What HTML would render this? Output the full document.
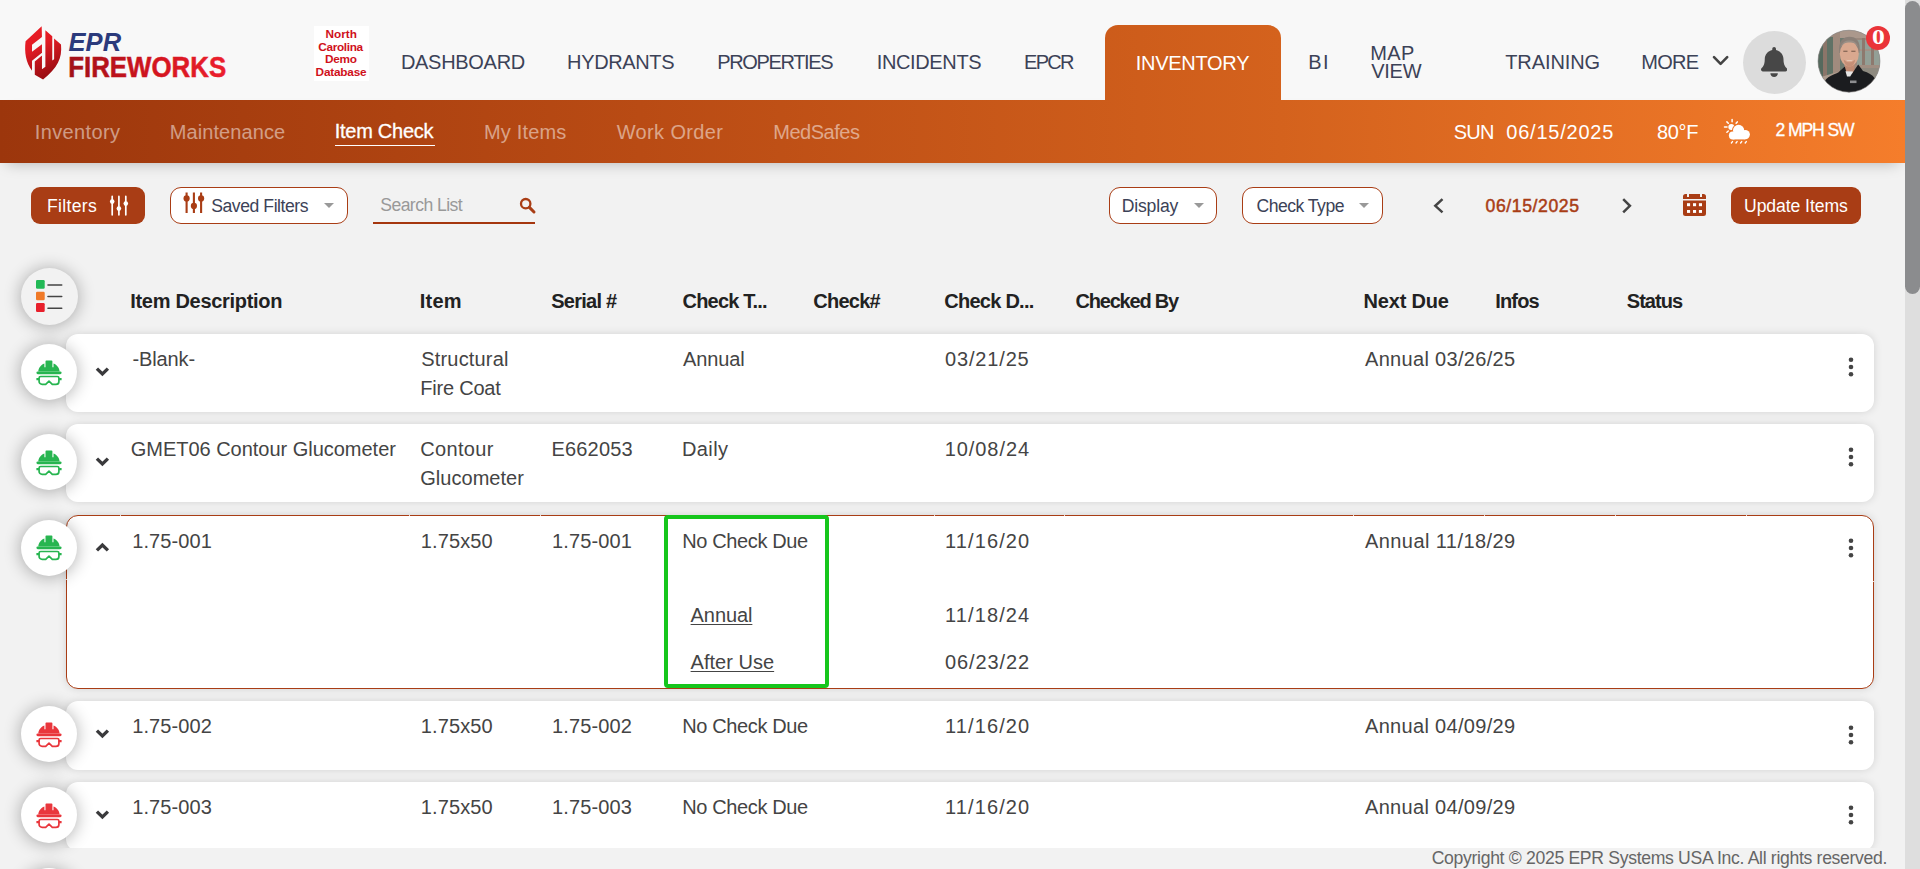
<!DOCTYPE html>
<html lang="en">
<head>
<meta charset="utf-8">
<title>EPR FireWorks - Item Check</title>
<style>
html,body{margin:0;padding:0;}
body{width:1920px;height:869px;overflow:hidden;background:#f2f2f2;font-family:"Liberation Sans",sans-serif;position:relative;}
#pg{position:absolute;left:0;top:0;width:1920px;height:869px;overflow:hidden;}
.a{position:absolute;}
.t{position:absolute;white-space:nowrap;z-index:5;}
.t.z{z-index:9;}
#hdr{left:0;top:0;width:1905px;height:100px;background:#f8f8f8;}
#tab{left:1105px;top:25px;width:176px;height:76px;border-radius:13px 13px 0 0;background:linear-gradient(90deg,#9c360c 0,#b94b14 640px,#d4621d 1280px,#f57d2b 1905px);background-size:1905px 100%;background-position:-1105px 0;background-repeat:no-repeat;z-index:3;}
#sub{left:0;top:100px;width:1905px;height:62.5px;background:linear-gradient(90deg,#9c360c 0,#b94b14 640px,#d4621d 1280px,#f57d2b 1905px);box-shadow:0 7px 14px -7px rgba(0,0,0,.27);z-index:2;}
#sbt{left:1905px;top:0;width:15px;height:869px;background:#dedede;z-index:20;}
#sbh{left:1905px;top:1px;width:15px;height:293px;border-radius:7.5px;background:#8b8c8e;z-index:21;}
.ul{background:#fff;height:1.3px;z-index:5;}
.btn{background:#a93d15;border-radius:9px;}
.sel{background:#fff;border:1px solid #a93d15;border-radius:11px;box-sizing:border-box;}
.caret{width:0;height:0;border-left:5px solid transparent;border-right:5px solid transparent;border-top:5.5px solid #999;}
.card{left:66px;width:1808px;background:#fff;border-radius:12px;box-shadow:0 0 9px rgba(0,0,0,.13);z-index:1;}
.card.sel3{box-sizing:border-box;border:1px solid #a93d15;border-radius:12px;}
.circ{left:21px;width:56px;height:56px;border-radius:50%;background:#fff;box-shadow:0 1px 17px rgba(0,0,0,.32);z-index:12;}
.circ svg{position:absolute;left:15px;top:15.5px;}
.dots{left:1846.8px;width:8px;height:22px;z-index:5;}
.chev{left:95.1px;margin-top:-.4px;width:15px;height:11px;z-index:5;}
#foot{left:0;top:848px;width:1905px;height:21px;background:#f2f2f2;z-index:8;}
#gbox{left:663.6px;top:514.5px;width:165.6px;height:173.4px;box-sizing:border-box;border:4px solid #16c61c;border-radius:4px;z-index:6;}
</style>
</head>
<body>
<div id="pg">

<!-- ===== top header ===== -->
<div id="hdr" class="a"></div>
<div id="tab" class="a"></div>
<div id="sub" class="a"></div>
<div id="sbt" class="a"></div>
<div id="sbh" class="a"></div>

<svg class="a" style="left:15px;top:15px;z-index:4;" width="120" height="80" viewBox="0 0 1304 869">
<defs>
<linearGradient id="lg1" x1="0" y1="0" x2="0.35" y2="1"><stop offset="0" stop-color="#ee1c25"/><stop offset=".45" stop-color="#e01b24"/><stop offset="1" stop-color="#9c0d12"/></linearGradient>
</defs>
<path fill="url(#lg1)" d="M290 122 L115 285 C100 400 118 520 185 605 L185 498 L293 410 L293 590 L330 562 L330 165 L405 232 L405 495 L425 480 L425 255 L500 320 C514 470 462 575 305 700 L215 648 L215 505 L293 440 L293 318 L185 398 L185 322 L293 240 Z"/>
</svg>
<svg class="a" style="left:60px;top:24px;z-index:4;overflow:visible" width="180" height="60">
<defs><linearGradient id="lg2" x1="0" y1="0" x2="1" y2="0"><stop offset="0" stop-color="#a01019"/><stop offset=".55" stop-color="#d3141f"/><stop offset="1" stop-color="#ec1f2e"/></linearGradient></defs>
<text x="8.6" y="26.6" font-family="Liberation Sans, sans-serif" font-weight="700" font-style="italic" font-size="26" fill="#2b3a7c" textLength="52.5" lengthAdjust="spacingAndGlyphs">EPR</text>
<text x="8.2" y="52.7" font-family="Liberation Sans, sans-serif" font-weight="700" font-size="28.8" fill="url(#lg2)" stroke="url(#lg2)" stroke-width=".5" textLength="158" lengthAdjust="spacingAndGlyphs">FIREWORKS</text>
</svg>

<!-- NC white box -->
<div class="a" style="left:314px;top:26px;width:55px;height:55px;background:#fff;z-index:1;"></div>

<svg class="a" style="left:1712px;top:55px;z-index:4;" width="18" height="12" viewBox="0 0 18 12"><path d="M2 2.2 L8.6 8.8 L15.2 2.2" fill="none" stroke="#444" stroke-width="2.6" stroke-linecap="round" stroke-linejoin="round"/></svg>
<div class="a" style="left:1743px;top:30.5px;width:63px;height:63px;border-radius:50%;background:#dcdcdc;z-index:4;"></div>
<svg class="a" style="left:1761.2px;top:47px;z-index:5;" width="26.25" height="30" viewBox="0 0 448 512"><path fill="#474747" d="M224 512c35.32 0 63.97-28.65 63.97-64H160.03c0 35.35 28.65 64 63.97 64zm215.39-149.71c-19.32-20.76-55.47-51.99-55.47-154.29 0-77.7-54.48-139.9-127.94-155.16V32c0-17.67-14.32-32-31.98-32s-31.98 14.33-31.98 32v20.84C118.560 68.100 64.080 130.300 64.080 208c0 102.300-36.150 133.530-55.470 154.290-6 6.450-8.660 14.160-8.610 21.710.11 16.400 12.980 32 32.100 32h383.800c19.120 0 32-15.600 32.100-32 .05-7.550-2.610-15.270-8.610-21.710z"/></svg>
<svg class="a" style="left:1817px;top:29px;z-index:4;" width="64" height="64" viewBox="0 0 64 64">
<defs><clipPath id="avc"><circle cx="32" cy="32.2" r="31"/></clipPath></defs>
<g clip-path="url(#avc)">
<rect width="64" height="64" fill="#9a887d"/>
<rect x="0" y="10" width="6" height="38" fill="#55695d"/>
<rect x="6" y="6" width="4" height="44" fill="#8b7569"/>
<rect x="10" y="8" width="6" height="40" fill="#607266"/>
<rect x="16" y="4" width="7" height="46" fill="#a08b7e"/>
<rect x="23" y="0" width="30" height="9" fill="#ab988c"/>
<rect x="23" y="9" width="4" height="34" fill="#6e7a70"/>
<rect x="40" y="11" width="24" height="27" fill="#939f96"/>
<rect x="40" y="20" width="24" height="2" fill="#a39186"/>
<rect x="45" y="9" width="3" height="36" fill="#8d796e"/>
<rect x="54" y="13" width="3" height="36" fill="#8d796e"/>
<rect x="38" y="36" width="26" height="3" fill="#a08e82"/>
<rect x="40" y="39" width="24" height="14" fill="#8e8a80"/>
<path d="M-2 50 L20 43 L20 48 L-2 56Z" fill="#ab9a8d"/>
<path d="M22.300 24 C20.800 12 26.500 7.800 32.600 7.800 C39 7.800 44 12 42.400 24Z" fill="#8a7f77"/>
<rect x="28" y="33" width="9.500" height="12" fill="#c08a72"/>
<ellipse cx="32.300" cy="24.800" rx="9.500" ry="12.600" fill="#d9a88f"/>
<path d="M23.500 18.500 C25 13.200 28.500 11.600 32.500 11.600 C36.500 11.600 40 13.200 41.300 18.500 C39.500 14.800 36.500 13.600 32.500 13.600 C28.500 13.600 25.500 14.800 23.500 18.500Z" fill="#9a8f86"/>
<path d="M26.500 30.500 Q32.500 36 38.200 30.500 Q37.500 37 32.500 37.800 Q27.500 37 26.500 30.500Z" fill="#c58f77"/>
<path d="M28.800 30.800 Q32.500 33.200 36.200 30.800 Q32.500 32 28.800 30.800Z" fill="#f2e6e0"/>
<rect x="26.300" y="21.700" width="4.200" height="1.100" fill="#7a5c4e"/><rect x="34.300" y="21.700" width="4.200" height="1.100" fill="#7a5c4e"/>
<path d="M4 64 C6 51 10 47.500 21 43.800 L27.800 37.500 L30 45.500 L35 44.800 L41.200 35.500 L46 42 C57 45 61 51 61.500 64Z" fill="#1b1c1f"/>
<path d="M28.500 42.200 L36.200 42.600 L33.200 47.500 L30 47.500Z" fill="#e6e6e6"/>
<rect x="33" y="51.500" width="6.500" height="2.600" fill="#8d8d90"/>
</g>
<circle cx="32" cy="32.200" r="31" fill="none" stroke="#8a8a8a" stroke-width=".6"/>
</svg>
<div class="a" style="left:1866px;top:26px;width:24px;height:24px;border-radius:50%;background:#ea3439;z-index:4;"></div>

<!-- sub nav active underline -->
<div class="a ul" style="left:335px;top:144.7px;width:100px;"></div>

<svg class="a" style="left:1722px;top:117px;z-index:5;" width="30" height="28" viewBox="0 0 30 28">
<g stroke="#fff" stroke-width="1.500" stroke-linecap="round"><path d="M10.100 2.600 V4.800 M4.900 4.900 L6.300 6.300 M2.500 10.100 H5 M4.900 15.200 L6.300 14 M15.300 4.900 L14.100 6.300"/></g>
<circle cx="9.300" cy="9.900" r="3" fill="#fff"/>
<g fill="#ed7628" stroke="#ed7628" stroke-width="2"><circle cx="16.600" cy="13.400" r="5.600"/><circle cx="23.200" cy="17.600" r="4.700"/><circle cx="10.800" cy="18.500" r="3.900"/></g>
<g fill="#fff"><circle cx="16.600" cy="13.400" r="5.600"/><circle cx="23.200" cy="17.600" r="4.700"/><circle cx="10.800" cy="18.500" r="3.900"/><rect x="10.800" y="16" width="12.400" height="6.400"/></g>
<g stroke="#fff" stroke-width="1.400" stroke-linecap="round"><path d="M10.500 24.600 L9.400 26 M15.100 24.600 L14 26 M19.700 24.600 L18.600 26 M24.300 24.600 L23.200 26"/></g>
</svg>

<!-- ===== toolbar ===== -->
<div class="a btn" style="left:31px;top:187px;width:114px;height:37px;"></div>
<div class="a sel" style="left:170px;top:187px;width:178px;height:37px;"></div>
<div class="a caret" style="left:324px;top:203px;"></div>
<div class="a" style="left:373px;top:222px;width:162px;height:2px;background:#a5360e;"></div>
<div class="a sel" style="left:1109px;top:187px;width:108px;height:37px;"></div>
<div class="a caret" style="left:1194px;top:203px;"></div>
<div class="a sel" style="left:1242px;top:187px;width:141px;height:37px;"></div>
<div class="a caret" style="left:1359px;top:203px;"></div>
<div class="a btn" style="left:1731px;top:187px;width:130px;height:37px;"></div>

<svg class="a" style="left:108px;top:194px;z-index:5;" width="22" height="23" viewBox="0 0 22 23"><g stroke="#fff" stroke-width="1.700" stroke-linecap="round"><path d="M4.200 2.400 V20.800 M10.900 2.400 V20.800 M17.800 2.400 V20.800"/></g><circle cx="4.200" cy="7.600" r="2.300" fill="#fff"/><circle cx="10.900" cy="14.600" r="2.300" fill="#fff"/><circle cx="17.800" cy="9.600" r="2.300" fill="#fff"/></svg>
<svg class="a" style="left:182px;top:190px;z-index:5;" width="24" height="25" viewBox="0 0 24 25"><g stroke="#a93d15" stroke-width="2.100"><path d="M4.600 2.400 V23 M11.900 2.400 V23 M19.100 2.400 V23"/></g><circle cx="4.600" cy="8.400" r="3.100" fill="#a93d15"/><circle cx="11.900" cy="15.900" r="3.100" fill="#a93d15"/><circle cx="19.100" cy="8.400" r="3.100" fill="#a93d15"/></svg>
<svg class="a" style="left:519px;top:196.500px;z-index:5;" width="18" height="18" viewBox="0 0 18 18"><circle cx="6.700" cy="6.700" r="4.700" fill="none" stroke="#a93d15" stroke-width="2.300"/><path d="M10.400 10.400 L15 15" stroke="#a93d15" stroke-width="3" stroke-linecap="round"/></svg>
<svg class="a" style="left:1431px;top:196px;z-index:5;" width="16" height="20" viewBox="0 0 16 20"><path d="M11.500 3.200 L4.300 9.800 L11.500 16.400" fill="none" stroke="#444" stroke-width="2.500" stroke-linecap="butt" stroke-linejoin="miter"/></svg>
<svg class="a" style="left:1619px;top:196px;z-index:5;" width="16" height="20" viewBox="0 0 16 20"><path d="M4.200 3.200 L10.900 9.800 L4.200 16.400" fill="none" stroke="#444" stroke-width="2.500" stroke-linecap="butt" stroke-linejoin="miter"/></svg>
<svg class="a" style="left:1683px;top:193.800px;z-index:5;" width="23" height="22" viewBox="0 0 23 22"><path fill="#a93d15" d="M2.500 0 H4 V3 H6 V0 H17 V3 H19 V0 H20.500 A2.500 2.500 0 0 1 23 2.500 V4.900 H0 V2.500 A2.500 2.500 0 0 1 2.500 0Z M0 6.400 H23 V19.500 A2.500 2.500 0 0 1 20.500 22 H2.500 A2.500 2.500 0 0 1 0 19.500Z"/><g fill="#fff"><rect x="4" y="9.200" width="3.100" height="3"/><rect x="10" y="9.200" width="3.100" height="3"/><rect x="15.900" y="9.200" width="3.100" height="3"/><rect x="4" y="16" width="3.100" height="2.900"/><rect x="10" y="16" width="3.100" height="2.900"/><rect x="15.900" y="16" width="3.100" height="2.900"/></g></svg>

<!-- ===== table ===== -->
<div class="a" style="left:21px;top:267.500px;width:57px;height:57px;border-radius:50%;background:#f2f2f2;box-shadow:0 1px 17px rgba(0,0,0,.32);z-index:12;"></div>
<svg class="a" style="left:34px;top:278px;z-index:13;" width="32" height="36" viewBox="0 0 32 36"><rect x="2" y="2" width="8.700" height="8.700" rx="1.200" fill="#22b956"/><rect x="2" y="13.700" width="8.700" height="8.600" rx="1.200" fill="#f07a28"/><rect x="2" y="25.100" width="8.700" height="8.800" rx="1.200" fill="#e8202c"/><g stroke="#444" stroke-width="1.600" stroke-linecap="round"><path d="M14 7 H27.700 M14 18.500 H27.700 M14 30.300 H27.700"/></g></svg>

<div class="a card" style="top:334px;height:78px;"></div>
<div class="a card" style="top:424px;height:78px;"></div>
<div class="a card sel3" style="top:515px;height:173.5px;"></div>
<div class="a card" style="top:701px;height:68.5px;"></div>
<div class="a card" style="top:782px;height:68.5px;"></div>
<div id="gbox" class="a"></div>
<div class="a" style="left:119.5px;top:515px;width:1.200px;height:1px;background:#f3d9cf;z-index:2;"></div><div class="a" style="left:409px;top:515px;width:1.200px;height:1px;background:#f3d9cf;z-index:2;"></div><div class="a" style="left:540px;top:515px;width:1.200px;height:1px;background:#f3d9cf;z-index:2;"></div><div class="a" style="left:933.5px;top:515px;width:1.200px;height:1px;background:#f3d9cf;z-index:2;"></div><div class="a" style="left:1064px;top:515px;width:1.200px;height:1px;background:#f3d9cf;z-index:2;"></div><div class="a" style="left:1352.5px;top:515px;width:1.200px;height:1px;background:#f3d9cf;z-index:2;"></div><div class="a" style="left:1484px;top:515px;width:1.200px;height:1px;background:#f3d9cf;z-index:2;"></div><div class="a" style="left:1615px;top:515px;width:1.200px;height:1px;background:#f3d9cf;z-index:2;"></div><div class="a" style="left:1745.5px;top:515px;width:1.200px;height:1px;background:#f3d9cf;z-index:2;"></div><div class="a" style="left:66px;top:578.500px;width:1px;height:1.200px;background:#f3d9cf;z-index:2;"></div><div class="a" style="left:1873px;top:580.500px;width:1px;height:1.200px;background:#f3d9cf;z-index:2;"></div>

<div class="a circ" style="top:344px;"><svg width="27" height="27" viewBox="0 0 27 27"><path fill="#27b550" d="M10.400 .4 H15.500 a.9 .9 0 0 1 .9 .9 V7.200 H17.500 V3.600 C21 5 23.500 8 23.600 11.600 H2.300 C2.400 8 4.900 5 8.400 3.600 V7.200 H9.500 V1.300 a.9 .9 0 0 1 .9 -.9Z"/><rect x=".4" y="11.400" width="25.200" height="2.900" rx="1.450" fill="#27b550"/><path fill="none" stroke="#27b550" stroke-width="1.700" stroke-linejoin="round" d="M4.700 16.500 H21.300 a1.600 1.600 0 0 1 1.600 1.600 V21.400 a3 3 0 0 1 -3 3 H16.300 L13 21.200 L9.700 24.400 H6.100 a3 3 0 0 1 -3 -3 V18.100 a1.600 1.600 0 0 1 1.600 -1.600Z"/><path stroke="#27b550" stroke-width="2.300" d="M.4 19.200 H3 M23 19.200 H25.600"/></svg></div>
<svg class="a chev" style="top:366.5px;" viewBox="0 0 15 11"><path d="M1.900 2.600 L7.400 8 L12.900 2.600" fill="none" stroke="#3a3a3c" stroke-width="3.300" stroke-linecap="butt" stroke-linejoin="miter"/></svg>
<div class="a circ" style="top:434px;"><svg width="27" height="27" viewBox="0 0 27 27"><path fill="#27b550" d="M10.400 .4 H15.500 a.9 .9 0 0 1 .9 .9 V7.200 H17.500 V3.600 C21 5 23.500 8 23.600 11.600 H2.300 C2.400 8 4.900 5 8.400 3.600 V7.200 H9.500 V1.300 a.9 .9 0 0 1 .9 -.9Z"/><rect x=".4" y="11.400" width="25.200" height="2.900" rx="1.450" fill="#27b550"/><path fill="none" stroke="#27b550" stroke-width="1.700" stroke-linejoin="round" d="M4.700 16.500 H21.300 a1.600 1.600 0 0 1 1.600 1.600 V21.400 a3 3 0 0 1 -3 3 H16.300 L13 21.200 L9.700 24.400 H6.100 a3 3 0 0 1 -3 -3 V18.100 a1.600 1.600 0 0 1 1.600 -1.600Z"/><path stroke="#27b550" stroke-width="2.300" d="M.4 19.200 H3 M23 19.200 H25.600"/></svg></div>
<svg class="a chev" style="top:456.5px;" viewBox="0 0 15 11"><path d="M1.900 2.600 L7.400 8 L12.900 2.600" fill="none" stroke="#3a3a3c" stroke-width="3.300" stroke-linecap="butt" stroke-linejoin="miter"/></svg>
<div class="a circ" style="top:519.5px;"><svg width="27" height="27" viewBox="0 0 27 27"><path fill="#27b550" d="M10.400 .4 H15.500 a.9 .9 0 0 1 .9 .9 V7.200 H17.500 V3.600 C21 5 23.500 8 23.600 11.600 H2.300 C2.400 8 4.900 5 8.400 3.600 V7.200 H9.500 V1.300 a.9 .9 0 0 1 .9 -.9Z"/><rect x=".4" y="11.400" width="25.200" height="2.900" rx="1.450" fill="#27b550"/><path fill="none" stroke="#27b550" stroke-width="1.700" stroke-linejoin="round" d="M4.700 16.500 H21.300 a1.600 1.600 0 0 1 1.600 1.600 V21.400 a3 3 0 0 1 -3 3 H16.300 L13 21.200 L9.700 24.400 H6.100 a3 3 0 0 1 -3 -3 V18.100 a1.600 1.600 0 0 1 1.600 -1.600Z"/><path stroke="#27b550" stroke-width="2.300" d="M.4 19.200 H3 M23 19.200 H25.600"/></svg></div>
<svg class="a chev" style="top:542.8px;" viewBox="0 0 15 11"><path d="M1.900 8.400 L7.400 3 L12.900 8.400" fill="none" stroke="#3a3a3c" stroke-width="3.300" stroke-linecap="butt" stroke-linejoin="miter"/></svg>
<div class="a circ" style="top:706.3px;"><svg width="27" height="27" viewBox="0 0 27 27"><path fill="#e9363c" d="M10.400 .4 H15.500 a.9 .9 0 0 1 .9 .9 V7.200 H17.500 V3.600 C21 5 23.500 8 23.600 11.600 H2.300 C2.400 8 4.900 5 8.400 3.600 V7.200 H9.500 V1.300 a.9 .9 0 0 1 .9 -.9Z"/><rect x=".4" y="11.400" width="25.200" height="2.900" rx="1.450" fill="#e9363c"/><path fill="none" stroke="#e9363c" stroke-width="1.700" stroke-linejoin="round" d="M4.700 16.500 H21.300 a1.600 1.600 0 0 1 1.600 1.600 V21.400 a3 3 0 0 1 -3 3 H16.300 L13 21.200 L9.700 24.400 H6.100 a3 3 0 0 1 -3 -3 V18.100 a1.600 1.600 0 0 1 1.600 -1.600Z"/><path stroke="#e9363c" stroke-width="2.300" d="M.4 19.200 H3 M23 19.200 H25.600"/></svg></div>
<svg class="a chev" style="top:728.0px;" viewBox="0 0 15 11"><path d="M1.900 2.600 L7.400 8 L12.900 2.600" fill="none" stroke="#3a3a3c" stroke-width="3.300" stroke-linecap="butt" stroke-linejoin="miter"/></svg>
<div class="a circ" style="top:787px;"><svg width="27" height="27" viewBox="0 0 27 27"><path fill="#e9363c" d="M10.400 .4 H15.500 a.9 .9 0 0 1 .9 .9 V7.200 H17.500 V3.600 C21 5 23.500 8 23.600 11.600 H2.300 C2.400 8 4.900 5 8.400 3.600 V7.200 H9.500 V1.300 a.9 .9 0 0 1 .9 -.9Z"/><rect x=".4" y="11.400" width="25.200" height="2.900" rx="1.450" fill="#e9363c"/><path fill="none" stroke="#e9363c" stroke-width="1.700" stroke-linejoin="round" d="M4.700 16.500 H21.300 a1.600 1.600 0 0 1 1.600 1.600 V21.400 a3 3 0 0 1 -3 3 H16.300 L13 21.200 L9.700 24.400 H6.100 a3 3 0 0 1 -3 -3 V18.100 a1.600 1.600 0 0 1 1.600 -1.600Z"/><path stroke="#e9363c" stroke-width="2.300" d="M.4 19.200 H3 M23 19.200 H25.600"/></svg></div>
<svg class="a chev" style="top:809.0px;" viewBox="0 0 15 11"><path d="M1.900 2.600 L7.400 8 L12.900 2.600" fill="none" stroke="#3a3a3c" stroke-width="3.300" stroke-linecap="butt" stroke-linejoin="miter"/></svg>
<div class="a circ" style="top:868px;"><svg width="27" height="27" viewBox="0 0 27 27"><path fill="#e9363c" d="M10.400 .4 H15.500 a.9 .9 0 0 1 .9 .9 V7.200 H17.500 V3.600 C21 5 23.500 8 23.600 11.600 H2.300 C2.400 8 4.900 5 8.400 3.600 V7.200 H9.500 V1.300 a.9 .9 0 0 1 .9 -.9Z"/><rect x=".4" y="11.400" width="25.200" height="2.900" rx="1.450" fill="#e9363c"/><path fill="none" stroke="#e9363c" stroke-width="1.700" stroke-linejoin="round" d="M4.700 16.500 H21.300 a1.600 1.600 0 0 1 1.600 1.600 V21.400 a3 3 0 0 1 -3 3 H16.300 L13 21.200 L9.700 24.400 H6.100 a3 3 0 0 1 -3 -3 V18.100 a1.600 1.600 0 0 1 1.600 -1.600Z"/><path stroke="#e9363c" stroke-width="2.300" d="M.4 19.200 H3 M23 19.200 H25.600"/></svg></div>
<svg class="a dots" style="top:356px;" viewBox="0 0 8 22"><circle cx="4" cy="3.800" r="2.300" fill="#444"/><circle cx="4" cy="11" r="2.300" fill="#444"/><circle cx="4" cy="18.200" r="2.300" fill="#444"/></svg>
<svg class="a dots" style="top:446px;" viewBox="0 0 8 22"><circle cx="4" cy="3.800" r="2.300" fill="#444"/><circle cx="4" cy="11" r="2.300" fill="#444"/><circle cx="4" cy="18.200" r="2.300" fill="#444"/></svg>
<svg class="a dots" style="top:537px;" viewBox="0 0 8 22"><circle cx="4" cy="3.800" r="2.300" fill="#444"/><circle cx="4" cy="11" r="2.300" fill="#444"/><circle cx="4" cy="18.200" r="2.300" fill="#444"/></svg>
<svg class="a dots" style="top:723.5px;" viewBox="0 0 8 22"><circle cx="4" cy="3.800" r="2.300" fill="#444"/><circle cx="4" cy="11" r="2.300" fill="#444"/><circle cx="4" cy="18.200" r="2.300" fill="#444"/></svg>
<svg class="a dots" style="top:804px;" viewBox="0 0 8 22"><circle cx="4" cy="3.800" r="2.300" fill="#444"/><circle cx="4" cy="11" r="2.300" fill="#444"/><circle cx="4" cy="18.200" r="2.300" fill="#444"/></svg>


<div id="foot" class="a"></div>

<nav class="main-nav">
<span class="t" style="left:400.90px;top:52.27px;font-size:20px;line-height:20px;color:#3c4257;letter-spacing:-0.293px;">DASHBOARD</span>
<span class="t" style="left:567.10px;top:52.27px;font-size:20px;line-height:20px;color:#3c4257;letter-spacing:-0.367px;">HYDRANTS</span>
<span class="t" style="left:717.30px;top:52.27px;font-size:20px;line-height:20px;color:#3c4257;letter-spacing:-1.357px;">PROPERTIES</span>
<span class="t" style="left:876.70px;top:52.27px;font-size:20px;line-height:20px;color:#3c4257;letter-spacing:-0.355px;">INCIDENTS</span>
<span class="t" style="left:1024.00px;top:52.27px;font-size:20px;line-height:20px;color:#3c4257;letter-spacing:-1.708px;">EPCR</span>
<span class="t" style="left:1135.70px;top:53.07px;font-size:20px;line-height:20px;color:#fff;letter-spacing:-0.265px;">INVENTORY</span>
<span class="t" style="left:1308.20px;top:52.27px;font-size:20px;line-height:20px;color:#3c4257;letter-spacing:1.360px;">BI</span>
<span class="t" style="left:1370.25px;top:43.07px;font-size:20px;line-height:20px;color:#3c4257;letter-spacing:0.375px;">MAP</span>
<span class="t" style="left:1371.25px;top:61.07px;font-size:20px;line-height:20px;color:#3c4257;letter-spacing:-0.262px;">VIEW</span>
<span class="t" style="left:1505.20px;top:52.27px;font-size:20px;line-height:20px;color:#3c4257;letter-spacing:-0.086px;">TRAINING</span>
<span class="t" style="left:1641.20px;top:52.27px;font-size:20px;line-height:20px;color:#3c4257;letter-spacing:-0.687px;">MORE</span>
</nav>
<nav class="sub-nav">
<span class="t" style="left:34.75px;top:122.32px;font-size:20px;line-height:20px;color:rgba(255,255,255,.5);letter-spacing:0.373px;">Inventory</span>
<span class="t" style="left:169.75px;top:122.32px;font-size:20px;line-height:20px;color:rgba(255,255,255,.5);letter-spacing:0.085px;">Maintenance</span>
<span class="t" style="left:334.75px;top:121.07px;font-size:20px;line-height:20px;color:#fff;letter-spacing:-0.266px;-webkit-text-stroke:.3px #fff;">Item Check</span>
<span class="t" style="left:484.00px;top:122.32px;font-size:20px;line-height:20px;color:rgba(255,255,255,.5);letter-spacing:0.162px;">My Items</span>
<span class="t" style="left:616.75px;top:122.32px;font-size:20px;line-height:20px;color:rgba(255,255,255,.5);letter-spacing:0.354px;">Work Order</span>
<span class="t" style="left:773.25px;top:122.32px;font-size:20px;line-height:20px;color:rgba(255,255,255,.5);letter-spacing:-0.471px;">MedSafes</span>
<span class="t" style="left:1453.75px;top:122.32px;font-size:20px;line-height:20px;color:#fff;letter-spacing:-0.767px;">SUN</span>
<span class="t" style="left:1506.25px;top:122.32px;font-size:20px;line-height:20px;color:#fff;letter-spacing:0.781px;">06/15/2025</span>
<span class="t" style="left:1657.00px;top:122.32px;font-size:20px;line-height:20px;color:#fff;letter-spacing:-0.331px;">80°F</span>
<span class="t" style="left:1775.50px;top:122.10px;font-size:17.6px;line-height:17.6px;color:#fff;letter-spacing:-1.127px;-webkit-text-stroke:.3px #fff;">2 MPH SW</span>
</nav>
<section class="toolbar">
<span class="t" style="left:47.10px;top:197.60px;font-size:17.6px;line-height:17.6px;color:#fff;letter-spacing:0.284px;">Filters</span>
<span class="t" style="left:211.25px;top:197.60px;font-size:17.6px;line-height:17.6px;color:#3c4257;letter-spacing:-0.448px;">Saved Filters</span>
<span class="t" style="left:380.25px;top:197.10px;font-size:17.6px;line-height:17.6px;color:#999;letter-spacing:-0.562px;">Search List</span>
<span class="t" style="left:1121.80px;top:197.60px;font-size:17.6px;line-height:17.6px;color:#3c4257;letter-spacing:-0.198px;">Display</span>
<span class="t" style="left:1256.50px;top:197.60px;font-size:17.6px;line-height:17.6px;color:#3c4257;letter-spacing:-0.513px;">Check Type</span>
<span class="t" style="left:1485.50px;top:197.70px;font-size:17.6px;line-height:17.6px;color:#a93d15;letter-spacing:0.609px;-webkit-text-stroke:.5px #a93d15;">06/15/2025</span>
<span class="t" style="left:1744.00px;top:197.70px;font-size:17.6px;line-height:17.6px;color:#fff;letter-spacing:-0.076px;">Update Items</span>
</section>
<div class="table-head">
<span class="t" style="left:130.25px;top:291.07px;font-size:20px;line-height:20px;color:#222;letter-spacing:-0.299px;font-weight:700;">Item Description</span>
<span class="t" style="left:419.75px;top:291.07px;font-size:20px;line-height:20px;color:#222;letter-spacing:0.220px;font-weight:700;">Item</span>
<span class="t" style="left:551.25px;top:291.07px;font-size:20px;line-height:20px;color:#222;letter-spacing:-0.756px;font-weight:700;">Serial #</span>
<span class="t" style="left:682.50px;top:291.07px;font-size:20px;line-height:20px;color:#222;letter-spacing:-0.800px;font-weight:700;">Check T...</span>
<span class="t" style="left:813.25px;top:291.07px;font-size:20px;line-height:20px;color:#222;letter-spacing:-0.756px;font-weight:700;">Check#</span>
<span class="t" style="left:944.25px;top:291.07px;font-size:20px;line-height:20px;color:#222;letter-spacing:-0.738px;font-weight:700;">Check D...</span>
<span class="t" style="left:1075.50px;top:291.07px;font-size:20px;line-height:20px;color:#222;letter-spacing:-1.208px;font-weight:700;">Checked By</span>
<span class="t" style="left:1363.50px;top:291.07px;font-size:20px;line-height:20px;color:#222;letter-spacing:-0.188px;font-weight:700;">Next Due</span>
<span class="t" style="left:1495.25px;top:291.07px;font-size:20px;line-height:20px;color:#222;letter-spacing:-0.850px;font-weight:700;">Infos</span>
<span class="t" style="left:1626.75px;top:291.07px;font-size:20px;line-height:20px;color:#222;letter-spacing:-0.950px;font-weight:700;">Status</span>
</div>
<div class="row row-1">
<span class="t" style="left:132.50px;top:349.32px;font-size:20px;line-height:20px;color:#444;letter-spacing:-0.115px;">-Blank-</span>
<span class="t" style="left:421.25px;top:349.32px;font-size:20px;line-height:20px;color:#444;letter-spacing:0.179px;">Structural</span>
<span class="t" style="left:420.25px;top:378.07px;font-size:20px;line-height:20px;color:#444;letter-spacing:-0.211px;">Fire Coat</span>
<span class="t" style="left:683.00px;top:349.32px;font-size:20px;line-height:20px;color:#444;letter-spacing:-0.116px;">Annual</span>
<span class="t" style="left:945.00px;top:349.32px;font-size:20px;line-height:20px;color:#444;letter-spacing:0.839px;">03/21/25</span>
<span class="t" style="left:1365.00px;top:349.32px;font-size:20px;line-height:20px;color:#444;letter-spacing:0.317px;">Annual 03/26/25</span>
</div>
<div class="row row-2">
<span class="t" style="left:130.75px;top:438.82px;font-size:20px;line-height:20px;color:#444;letter-spacing:-0.021px;">GMET06 Contour Glucometer</span>
<span class="t" style="left:420.25px;top:438.82px;font-size:20px;line-height:20px;color:#444;letter-spacing:0.335px;">Contour</span>
<span class="t" style="left:420.25px;top:468.07px;font-size:20px;line-height:20px;color:#444;letter-spacing:0.032px;">Glucometer</span>
<span class="t" style="left:551.50px;top:438.82px;font-size:20px;line-height:20px;color:#444;letter-spacing:0.174px;">E662053</span>
<span class="t" style="left:682.00px;top:438.82px;font-size:20px;line-height:20px;color:#444;letter-spacing:0.387px;">Daily</span>
<span class="t" style="left:944.70px;top:438.82px;font-size:20px;line-height:20px;color:#444;letter-spacing:0.939px;">10/08/24</span>
</div>
<div class="row row-3 expanded">
<span class="t" style="left:132.25px;top:531.07px;font-size:20px;line-height:20px;color:#444;letter-spacing:0.095px;">1.75-001</span>
<span class="t" style="left:420.70px;top:531.07px;font-size:20px;line-height:20px;color:#444;letter-spacing:0.142px;">1.75x50</span>
<span class="t" style="left:551.90px;top:531.07px;font-size:20px;line-height:20px;color:#444;letter-spacing:0.153px;">1.75-001</span>
<span class="t" style="left:682.30px;top:531.07px;font-size:20px;line-height:20px;color:#444;letter-spacing:-0.385px;">No Check Due</span>
<span class="t" style="left:945.10px;top:531.07px;font-size:20px;line-height:20px;color:#444;letter-spacing:1.094px;">11/16/20</span>
<span class="t" style="left:1365.00px;top:531.07px;font-size:20px;line-height:20px;color:#444;letter-spacing:0.423px;">Annual 11/18/29</span>
<span class="t" style="left:690.60px;top:605.07px;font-size:20px;line-height:20px;color:#444;letter-spacing:-0.086px;text-decoration:underline;text-decoration-thickness:1.3px;text-underline-offset:2px;">Annual</span>
<span class="t" style="left:945.10px;top:605.07px;font-size:20px;line-height:20px;color:#444;letter-spacing:1.094px;">11/18/24</span>
<span class="t" style="left:690.60px;top:652.07px;font-size:20px;line-height:20px;color:#444;letter-spacing:0.020px;text-decoration:underline;text-decoration-thickness:1.3px;text-underline-offset:2px;">After Use</span>
<span class="t" style="left:945.00px;top:652.07px;font-size:20px;line-height:20px;color:#444;letter-spacing:0.896px;">06/23/22</span>
</div>
<div class="row row-4">
<span class="t" style="left:132.25px;top:716.07px;font-size:20px;line-height:20px;color:#444;letter-spacing:0.095px;">1.75-002</span>
<span class="t" style="left:420.70px;top:716.07px;font-size:20px;line-height:20px;color:#444;letter-spacing:0.142px;">1.75x50</span>
<span class="t" style="left:551.90px;top:716.07px;font-size:20px;line-height:20px;color:#444;letter-spacing:0.153px;">1.75-002</span>
<span class="t" style="left:682.30px;top:716.07px;font-size:20px;line-height:20px;color:#444;letter-spacing:-0.385px;">No Check Due</span>
<span class="t" style="left:945.10px;top:716.07px;font-size:20px;line-height:20px;color:#444;letter-spacing:1.094px;">11/16/20</span>
<span class="t" style="left:1365.00px;top:716.07px;font-size:20px;line-height:20px;color:#444;letter-spacing:0.317px;">Annual 04/09/29</span>
</div>
<div class="row row-5">
<span class="t" style="left:132.25px;top:797.07px;font-size:20px;line-height:20px;color:#444;letter-spacing:0.095px;">1.75-003</span>
<span class="t" style="left:420.70px;top:797.07px;font-size:20px;line-height:20px;color:#444;letter-spacing:0.142px;">1.75x50</span>
<span class="t" style="left:551.90px;top:797.07px;font-size:20px;line-height:20px;color:#444;letter-spacing:0.153px;">1.75-003</span>
<span class="t" style="left:682.30px;top:797.07px;font-size:20px;line-height:20px;color:#444;letter-spacing:-0.385px;">No Check Due</span>
<span class="t" style="left:945.10px;top:797.07px;font-size:20px;line-height:20px;color:#444;letter-spacing:1.094px;">11/16/20</span>
<span class="t" style="left:1365.00px;top:797.07px;font-size:20px;line-height:20px;color:#444;letter-spacing:0.317px;">Annual 04/09/29</span>
</div>
<div class="db-label">
<span class="t" style="left:325.40px;top:28.91px;font-size:11.8px;line-height:11.8px;color:#d0111b;letter-spacing:0.014px;font-weight:700;">North</span>
<span class="t" style="left:318.30px;top:41.61px;font-size:11.8px;line-height:11.8px;color:#d0111b;letter-spacing:-0.334px;font-weight:700;">Carolina</span>
<span class="t" style="left:325.00px;top:54.21px;font-size:11.8px;line-height:11.8px;color:#d0111b;letter-spacing:-0.290px;font-weight:700;">Demo</span>
<span class="t" style="left:315.60px;top:66.81px;font-size:11.8px;line-height:11.8px;color:#d0111b;letter-spacing:-0.214px;font-weight:700;">Database</span>
</div>
<footer class="copyright">
<span class="t z" style="left:1431.70px;top:850.30px;font-size:17.6px;line-height:17.6px;color:#666;letter-spacing:-0.312px;">Copyright © 2025 EPR Systems USA Inc. All rights reserved.</span>
</footer>
<div class="notify-badge">
<span class="t" style="left:1872.10px;top:26.61px;font-size:21px;line-height:21px;color:#fff;letter-spacing:0.000px;font-weight:700;font-family:'Liberation Serif',serif;transform:scaleX(1.22);transform-origin:0 50%;">0</span>
</div>

</div>
</body>
</html>
